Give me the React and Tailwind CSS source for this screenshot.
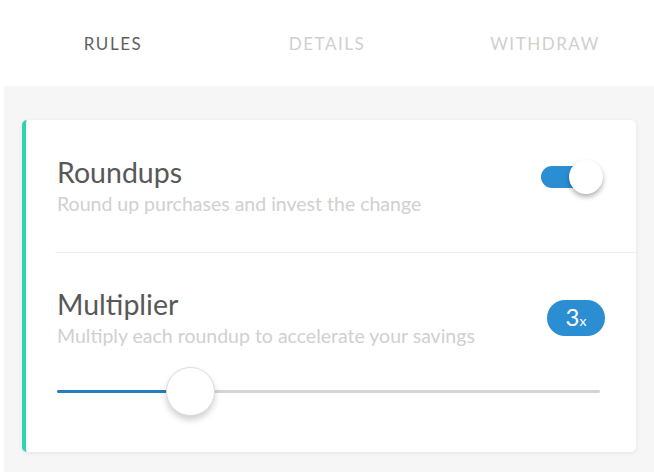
import React from "react";

const tabs = [
  { label: "RULES", active: true },
  { label: "DETAILS", active: false },
  { label: "WITHDRAW", active: false },
];

function Toggle() {
  return (
    <div className="relative h-[34px] w-[62px] flex items-center">
      <div className="h-[22px] w-[50px] rounded-full bg-[#2b8ed3]" />
      <div className="absolute right-0 top-0 h-[34px] w-[34px] rounded-full bg-white shadow-[0_3px_5px_rgba(0,0,0,0.3)]" />
    </div>
  );
}

function Slider({ value }) {
  return (
    <div className="relative h-[50px] w-[543px]">
      <div className="absolute left-0 right-0 top-[23px] h-[3px] rounded-full bg-[#d4d4d4]" />
      <div
        className="absolute left-0 top-[23px] h-[3px] rounded-full bg-[#2a7cbd]"
        style={{ width: `${value}px` }}
      />
      <div
        className="absolute top-0 h-[49px] w-[49px] rounded-full border border-[#dcdcdc] bg-white shadow-[0_4px_6px_rgba(0,0,0,0.18)]"
        style={{ left: `${value - 24}px` }}
      />
    </div>
  );
}

export default function App() {
  return (
    <div className="h-[472px] w-[654px] overflow-hidden bg-white font-['Lato','Noto_Sans',sans-serif]">
      <div className="grid h-[86px] grid-cols-3 items-center pt-[1px] text-center text-[17px] tracking-[0.09em]">
        {tabs.map((t) => (
          <div key={t.label} className={t.active ? "pl-[8px] text-[#5f5f5f]" : "text-[#cfcfcf]"}>
            {t.label}
          </div>
        ))}
      </div>

      <div className="pl-[4px]">
        <div className="h-[386px] bg-[#f6f6f6] px-[18px] pt-[34px]">
          <div className="h-[332px] rounded-[5px] border-l-[4px] border-[#2dd4b0] bg-white shadow-[0_1px_4px_rgba(0,0,0,0.08)]">
            <div className="flex h-[132px] items-start justify-between pl-[31px] pr-[33px] pt-[35px]">
              <div>
                <div className="text-[28.5px] leading-[34px] text-[#585858]">Roundups</div>
                <div className="mt-[2px] text-[19.5px] leading-[26px] text-[#d0d0d0]">
                  Round up purchases and invest the change
                </div>
              </div>
              <div className="mt-[5px]">
                <Toggle />
              </div>
            </div>

            <div className="ml-[29px] h-px bg-[#f1f1f1]" />

            <div className="pl-[31px] pr-[31px] pt-[34px]">
              <div className="flex items-center justify-between">
                <div>
                  <div className="text-[28.5px] leading-[34px] text-[#585858]">Multiplier</div>
                  <div className="mt-[2px] text-[19.5px] leading-[26px] text-[#d0d0d0]">
                    Multiply each roundup to accelerate your savings
                  </div>
                </div>
                <div className="flex h-[36px] w-[58px] items-baseline justify-center rounded-full bg-[#2b8ed3] pt-[3px] text-white">
                  <span className="text-[24px] leading-[28px]">3</span>
                  <span className="text-[14px] leading-[28px]">x</span>
                </div>
              </div>
              <div className="mt-[18px]">
                <Slider value={133} />
              </div>
            </div>
          </div>
        </div>
      </div>
    </div>
  );
}
